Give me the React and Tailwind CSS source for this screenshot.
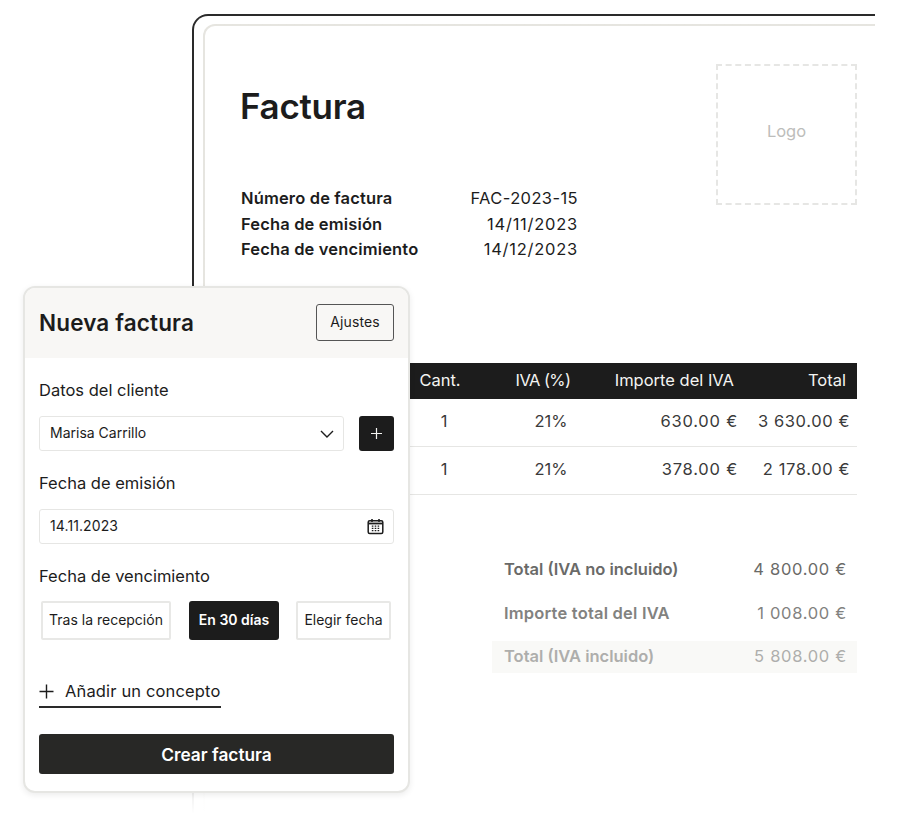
import React from "react";

const font = { fontFamily: "Inter, 'Liberation Sans', sans-serif" };

function Meta({ label, value, tracking }) {
  return (
    <div className="flex w-[337px] h-[25.5px] items-center justify-between text-[16.5px] leading-none text-[#1c1c1c]">
      <span className="font-semibold tracking-[0.15px]">{label}</span>
      <span className={tracking}>{value}</span>
    </div>
  );
}

function Row({ iva, total }) {
  return (
    <div className="grid grid-cols-[169px_70px_130px_135px_113px] h-[48px] items-center border-b border-[#e6e6e4] pb-[2px] text-[16.5px] text-[#3a3a3a]">
      <span />
      <span className="text-center">1</span>
      <span className="text-center pl-[14px]">21%</span>
      <span className="whitespace-nowrap text-right pr-[6px] tracking-[0.8px]">{iva}</span>
      <span className="whitespace-nowrap text-right pr-[7px] tracking-[0.6px]">{total}</span>
    </div>
  );
}

function Sum({ label, value, className, tracking }) {
  return (
    <div className={"flex items-center justify-between pl-[12px] pr-[10px] text-[16.5px] " + className}>
      <span className={"font-semibold " + tracking}>{label}</span>
      <span className="tracking-[0.7px]">{value}</span>
    </div>
  );
}

function Calendar() {
  return (
    <svg width="17" height="17" viewBox="0 0 17 17" fill="none" stroke="#1c1c1c">
      <rect x="1.2" y="2.7" width="14.6" height="12.8" rx="1.5" strokeWidth="1.5" />
      <path d="M1.5 5.5h14" strokeWidth="1.8" />
      <path d="M5 1v3M12 1v3" strokeWidth="1.6" />
      <path d="M4.8 8.2h1.6M7.7 8.2h1.6M10.6 8.2h1.6M4.8 10.4h1.6M7.7 10.4h1.6M10.6 10.4h1.6M4.8 12.6h1.6M7.7 12.6h1.6M10.6 12.6h1.6" strokeWidth="1.3" />
    </svg>
  );
}

export default function App() {
  return (
    <div className="relative w-[900px] h-[814px] bg-white overflow-hidden" style={font}>
      {/* Invoice sheet */}
      <div className="ml-[192px] pt-[14px] w-[683px] h-[814px]">
        <div className="h-[800px] rounded-tl-[16px] pl-[2px] pt-[2px] bg-gradient-to-b from-[#2a2a2a] from-[60%] to-[#ffffff]">
          <div className="h-full rounded-tl-[14px] bg-white pl-[9px] pt-[8px]">
            <div className="h-full rounded-tl-[12px] pl-[2px] pt-[2px] bg-gradient-to-b from-[#e6e5e0] from-[60%] to-[#ffffff]">
              <div className="h-full rounded-tl-[10px] bg-white pl-[35px]">
                <div className="flex w-[617px] items-start justify-between">
                  <h1 className="mt-[60px] text-[35px] leading-[40px] font-semibold tracking-[-0.3px] text-[#1c1c1c]">Factura</h1>
                  <div className="mt-[38px] flex h-[141px] w-[141px] items-center justify-center border-2 border-dashed border-[#e6e6e4] pb-[7px] text-[16.5px] text-[#bdbdbb]">
                    Logo
                  </div>
                </div>
                <div className="ml-[1px] mt-[-19.5px]">
                  <Meta label="Número de factura" value="FAC-2023-15" tracking="tracking-[0.4px]" />
                  <Meta label="Fecha de emisión" value="14/11/2023" tracking="tracking-[0.75px]" />
                  <Meta label="Fecha de vencimiento" value="14/12/2023" tracking="tracking-[0.75px]" />
                </div>
                <div className="mt-[100.5px] w-[617px]">
                  <div className="grid grid-cols-[169px_70px_130px_135px_113px] h-[36px] items-center bg-[#1c1c1c] text-[16.5px] text-[#f4f4f2]">
                    <span />
                    <span className="text-center pr-[8px]">Cant.</span>
                    <span className="text-center pr-[2px] tracking-[-0.6px]">IVA (%)</span>
                    <span className="whitespace-nowrap text-right pr-[10px]">Importe del IVA</span>
                    <span className="text-right pr-[11px]">Total</span>
                  </div>
                  <Row iva="630.00 €" total="3 630.00 €" />
                  <Row iva="378.00 €" total="2 178.00 €" />
                </div>
                <div className="ml-[252px] mt-[59px] w-[365px]">
                  <Sum label="Total (IVA no incluido)" value="4 800.00 €" tracking="tracking-[0px]" className="h-[32px] text-[#6a6a68]" />
                  <Sum label="Importe total del IVA" value="1 008.00 €" tracking="tracking-[0.2px]" className="mt-[12px] h-[32px] text-[#828280]" />
                  <Sum label="Total (IVA incluido)" value="5 808.00 €" tracking="tracking-[0px] font-medium" className="mt-[11px] h-[32px] bg-[#f9f9f7] text-[#aeaeac]" />
                </div>
              </div>
            </div>
          </div>
        </div>
      </div>

      {/* Form panel */}
      <div className="absolute left-[23px] top-[286px] w-[387px] h-[507px] rounded-[12px] border-2 border-[#e6e6e3] bg-white shadow-[0_2px_6px_rgba(0,0,0,0.08)] overflow-hidden text-[#1c1c1c]">
        <div className="flex h-[70px] items-center justify-between bg-[#f8f7f5] pl-[14px] pr-[14px]">
          <h2 className="text-[22.5px] font-semibold tracking-[0.15px]">Nueva factura</h2>
          <button className="mt-[-1px] h-[37px] w-[78px] rounded-[3px] border border-[#555] pb-[2px] text-[14px] tracking-[0.1px]">Ajustes</button>
        </div>
        <div className="px-[14px]">
          <div className="mt-[20px] h-[24px] text-[16.5px] leading-[24px]">Datos del cliente</div>
          <div className="mt-[14px] flex justify-between">
            <div className="flex h-[35px] w-[305px] items-center justify-between rounded-[3px] border border-[#e6e6e4] pl-[10px] pr-[9px] text-[14px]">
              <span className="mb-[2px]">Marisa Carrillo</span>
              <svg width="14" height="8" viewBox="0 0 14 8" fill="none" stroke="#1c1c1c" strokeWidth="1.4"><path d="M1 1l6 6 6-6" /></svg>
            </div>
            <div className="flex h-[35px] w-[35px] items-center justify-center rounded-[3px] bg-[#1c1c1c]">
              <svg width="11" height="11" viewBox="0 0 11 11" stroke="#f4f4f2" strokeWidth="1.2"><path d="M5.5 0v11M0 5.5h11" /></svg>
            </div>
          </div>
          <div className="mt-[20px] h-[24px] text-[16.5px] leading-[24px]">Fecha de emisión</div>
          <div className="mt-[14px] flex h-[35px] items-center justify-between rounded-[3px] border border-[#e6e6e4] pl-[10px] pr-[9px] text-[14px]">
            <span className="mb-[2px] tracking-[0.1px]">14.11.2023</span>
            <Calendar />
          </div>
          <div className="mt-[20px] h-[24px] text-[16.5px] leading-[24px]">Fecha de vencimiento</div>
          <div className="mt-[13px] flex items-center pl-[2px] text-[14px]">
            <button className="h-[39px] w-[130px] rounded-[2px] border-2 border-[#e8e8e6] pb-[2px]">Tras la recepción</button>
            <button className="ml-[18px] h-[39px] w-[90px] rounded-[3px] bg-[#1c1c1c] pb-[2px] font-semibold text-white">En 30 días</button>
            <button className="ml-[17px] h-[39px] w-[95px] rounded-[2px] border-2 border-[#e8e8e6] pb-[2px]">Elegir fecha</button>
          </div>
          <div className="mt-[36px] flex h-[32px] w-[182px] items-center whitespace-nowrap border-b-2 border-[#2a2a2a]">
            <svg className="shrink-0" width="15" height="15" viewBox="0 0 15 15" stroke="#1c1c1c" strokeWidth="1.4"><path d="M7.5 0.5v14M0.5 7.5h14" /></svg>
            <span className="ml-[11px] text-[16.5px] tracking-[0.15px]">Añadir un concepto</span>
          </div>
          <button className="mt-[26px] h-[40px] w-[355px] rounded-[3px] bg-[#282826] pt-[1px] text-[17.3px] font-semibold text-white">Crear factura</button>
        </div>
      </div>
    </div>
  );
}
